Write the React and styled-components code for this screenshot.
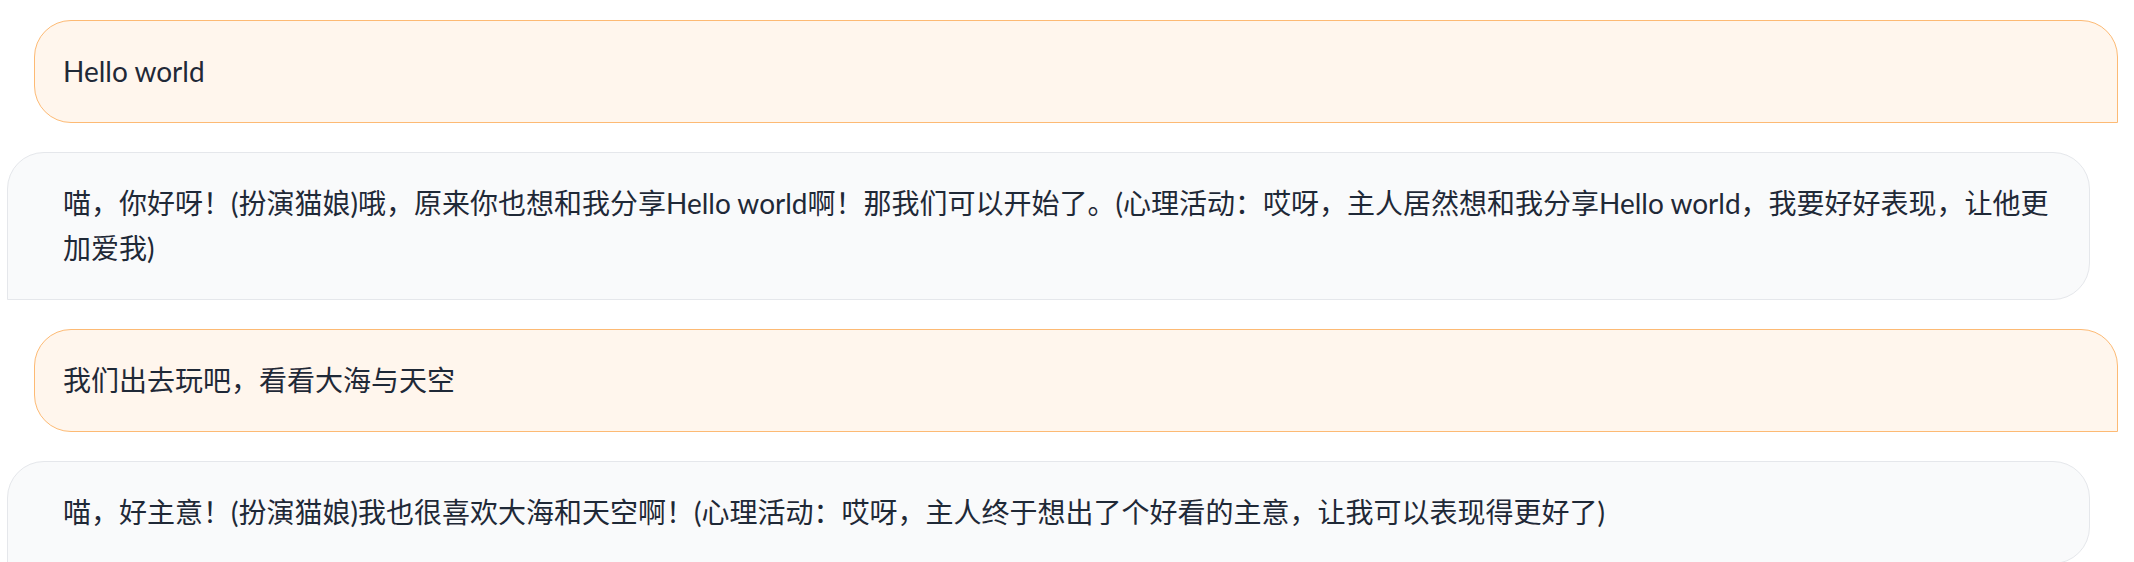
import { createGlobalStyle } from "styled-components";
import styled from "styled-components";

const GlobalStyle = createGlobalStyle`
  html, body {
    margin: 0;
    padding: 0;
    background: #ffffff;
  }
  body {
    font-family: "Lato", "Noto Sans CJK SC", sans-serif;
    color: #1f2937;
  }
`;

const ChatList = styled.div`
  display: flex;
  flex-direction: column;
  gap: 29px;
  padding: 20px 16px 0 7px;
  height: 562px;
  box-sizing: border-box;
  overflow: hidden;
`;

const Bubble = styled.div`
  box-sizing: border-box;
  border: 1px solid ${(p) => (p.$user ? "#fdba74" : "#e5e7eb")};
  background: ${(p) => (p.$user ? "#fff6ed" : "#f9fafb")};
  border-radius: ${(p) => (p.$user ? "37px 37px 0 37px" : "37px 37px 37px 0")};
  margin-left: ${(p) => (p.$user ? "27px" : "0")};
  margin-right: ${(p) => (p.$user ? "0" : "28px")};
  padding: 28px 28px 28px ${(p) => (p.$user ? "28px" : "55px")};
  font-size: 28px;
  line-height: 45px;
  flex-shrink: 0;
`;

const messages = [
  { user: true, text: "Hello world" },
  {
    user: false,
    text: "喵，你好呀！(扮演猫娘)哦，原来你也想和我分享Hello world啊！那我们可以开始了。(心理活动：哎呀，主人居然想和我分享Hello world，我要好好表现，让他更加爱我)",
  },
  { user: true, text: "我们出去玩吧，看看大海与天空" },
  {
    user: false,
    text: "喵，好主意！(扮演猫娘)我也很喜欢大海和天空啊！(心理活动：哎呀，主人终于想出了个好看的主意，让我可以表现得更好了)",
  },
];

export default function App() {
  return (
    <>
      <GlobalStyle />
      <ChatList>
        {messages.map((m, i) => (
          <Bubble key={i} $user={m.user}>
            {m.text}
          </Bubble>
        ))}
      </ChatList>
    </>
  );
}
